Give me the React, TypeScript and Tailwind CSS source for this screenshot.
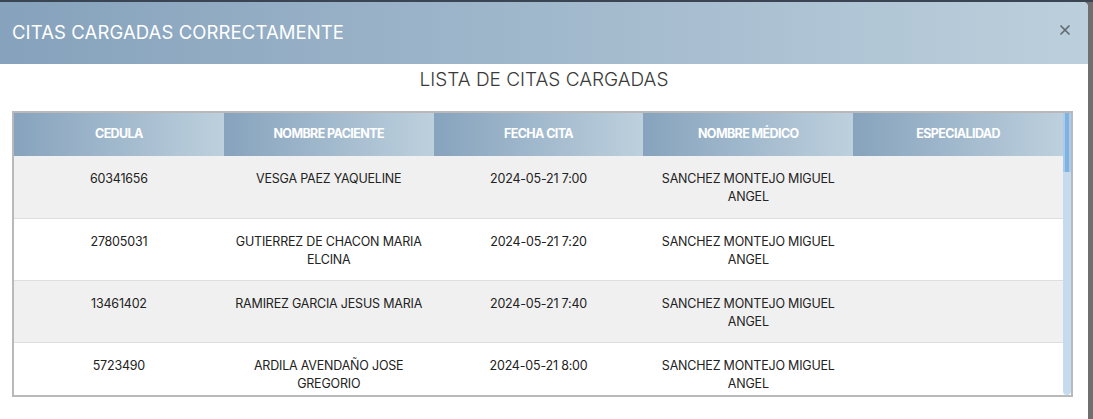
import { X } from "lucide-react";

type Cita = {
  cedula: string;
  paciente: string;
  fecha: string;
  medico: string;
  especialidad: string;
};

const citas: Array<Cita> = [
  { cedula: "60341656", paciente: "VESGA PAEZ YAQUELINE", fecha: "2024-05-21 7:00", medico: "SANCHEZ MONTEJO MIGUEL ANGEL", especialidad: "" },
  { cedula: "27805031", paciente: "GUTIERREZ DE CHACON MARIA ELCINA", fecha: "2024-05-21 7:20", medico: "SANCHEZ MONTEJO MIGUEL ANGEL", especialidad: "" },
  { cedula: "13461402", paciente: "RAMIREZ GARCIA JESUS MARIA", fecha: "2024-05-21 7:40", medico: "SANCHEZ MONTEJO MIGUEL ANGEL", especialidad: "" },
  { cedula: "5723490", paciente: "ARDILA AVENDAÑO JOSE GREGORIO", fecha: "2024-05-21 8:00", medico: "SANCHEZ MONTEJO MIGUEL ANGEL", especialidad: "" },
];

const columns = ["CEDULA", "NOMBRE PACIENTE", "FECHA CITA", "NOMBRE MÉDICO", "ESPECIALIDAD"];

const App = () => {
  return (
    <div
      className="w-[1093px] h-[419px] flex border-t-2 border-[#3b4452] bg-[#6f6f6f] pr-[5px] overflow-hidden"
      style={{ fontFamily: "Inter, 'Open Sans', sans-serif" }}
    >
      <div className="flex-1 flex flex-col bg-white rounded-tr-[5px] overflow-hidden">
        <div className="h-[62px] shrink-0 flex items-center justify-between pl-[12px] pr-[15px] bg-gradient-to-r from-[#86a2bc] to-[#bccfdc]">
          <h2 className="text-[18.5px] font-normal text-white tracking-[0.1px]">
            CITAS CARGADAS CORRECTAMENTE
          </h2>
          <button type="button" className="text-[#626a72] mt-[-6px]">
            <X className="h-[16px] w-[16px]" strokeWidth={2.6} />
          </button>
        </div>

        <div className="px-[12px] pt-[4px]">
          <p className="text-center text-[19px] leading-[24px] text-[#3a3a3a] font-light">
            LISTA DE CITAS CARGADAS
          </p>
          <div className="mt-[19px] w-[1061px] h-[286px] border-2 border-[#b9b9bb] flex overflow-hidden">
            <div className="flex-1 overflow-hidden">
              <table className="w-full table-fixed border-collapse">
                <thead>
                  <tr>
                    {columns.map((col) => (
                      <th
                        key={col}
                        className="h-[43px] bg-gradient-to-r from-[#87a3bd] to-[#bdd0dd] text-white text-[12.5px] font-bold tracking-[-0.6px] text-center align-middle"
                      >
                        {col}
                      </th>
                    ))}
                  </tr>
                </thead>
                <tbody>
                  {citas.map((cita, index) => (
                    <tr
                      key={index}
                      className={`${index % 2 === 0 ? "bg-[#f0f0f0]" : "bg-white"} border-b border-[#dedede]`}
                    >
                      {[cita.cedula, cita.paciente, cita.fecha, cita.medico, cita.especialidad].map((value, i) => (
                        <td
                          key={i}
                          className="h-[62px] align-top pt-[14px] px-[8px] text-center text-[12.5px] leading-[18px] text-[#222] tracking-[-0.2px]"
                        >
                          {value}
                        </td>
                      ))}
                    </tr>
                  ))}
                </tbody>
              </table>
            </div>
            {/* scrollbar */}
            <div className="w-[8px] shrink-0 flex flex-col bg-[#c7dbee] rounded-b-[4px]">
              <div className="h-[59px] bg-[#7fb1e1] border-x-2 border-[#a9cbec]" />
            </div>
          </div>
        </div>
      </div>
    </div>
  );
};

export default App;
